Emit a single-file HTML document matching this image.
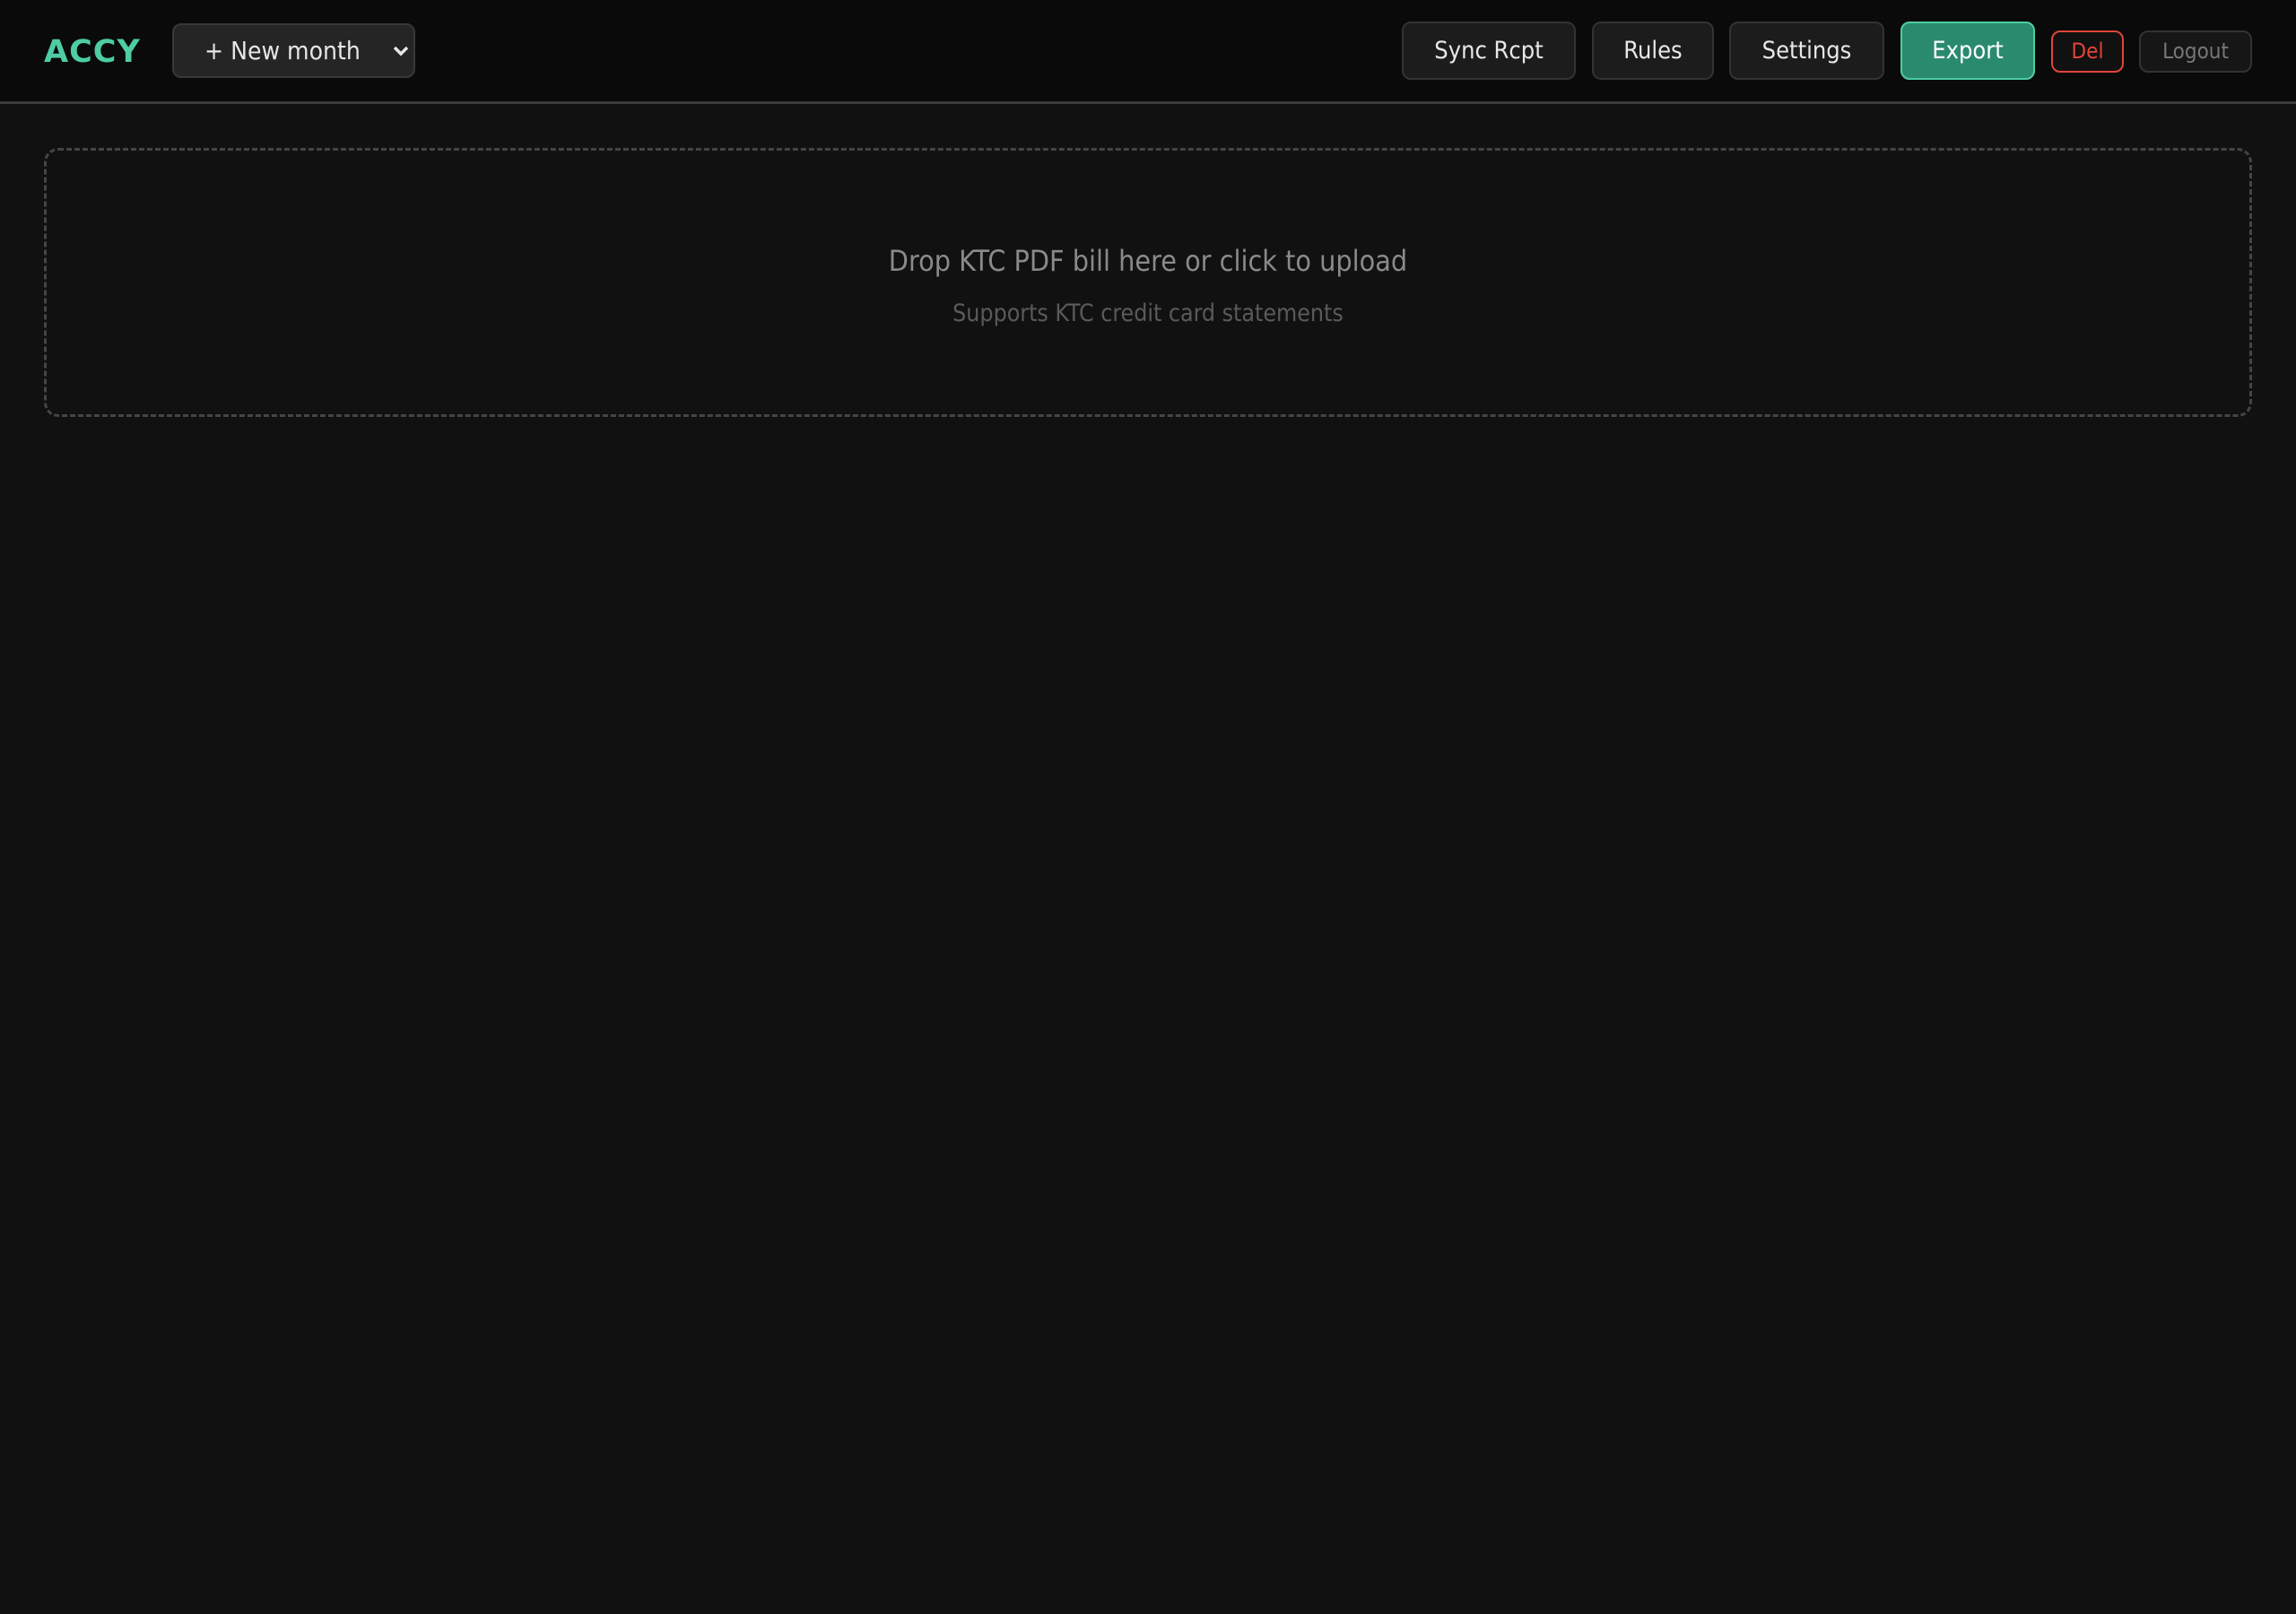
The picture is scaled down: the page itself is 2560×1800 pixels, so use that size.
<!DOCTYPE html>
<html><head><style>
*{box-sizing:border-box;margin:0;padding:0}
html,body{width:2560px;height:1800px;background:#111111;overflow:hidden;font-family:"DejaVu Sans Condensed","DejaVu Sans","Liberation Sans",sans-serif}
header{position:absolute;left:0;top:0;width:2560px;height:116px;background:#0a0a0a;border-bottom:3px solid #3a3a3a}
.logo{position:absolute;left:49px;top:38px;font-family:"DejaVu Sans",sans-serif;font-weight:bold;font-size:35px;color:#4ecca3;letter-spacing:1px}
.sel{position:absolute;left:192px;top:26px;width:271px;height:61px;background:#252525;border:2px solid #383838;border-radius:10px;color:#e6e6e6;font-size:28px;line-height:57px;padding-left:34px}
.sel svg{position:absolute;left:244px;top:22px}
.btn{position:absolute;top:24px;height:65px;background:#1c1c1c;border:2px solid #333;border-radius:10px;color:#e8e8e8;font-size:27px;line-height:61px;text-align:center}
.sm{top:34px;height:47px;line-height:43px;font-size:24px}
.drop{position:absolute;left:49px;top:165px;width:2462px;height:300px;border:3px dashed #444;border-radius:16px;text-align:center}
.t1{position:absolute;left:0;right:0;top:104px;font-size:32px;color:#8a8a8a;font-weight:500}
.t2{position:absolute;left:0;right:0;top:166px;font-size:26.5px;color:#5a5a5a}
</style></head><body>
<header>
<div class="logo">ACCY</div>
<div class="sel">+ New month<svg width="18" height="14" viewBox="0 0 18 14"><path d="M2 3 L9 10 L16 3" fill="none" stroke="#e6e6e6" stroke-width="3.5"/></svg></div>
<div class="btn" style="left:1563px;width:194px">Sync Rcpt</div>
<div class="btn" style="left:1775px;width:136px">Rules</div>
<div class="btn" style="left:1928px;width:173px">Settings</div>
<div class="btn" style="left:2119px;width:150px;background:#2a8a6e;border-color:#4ecca3;color:#fff">Export</div>
<div class="btn sm" style="left:2287px;width:81px;border-color:#e0453a;color:#e0453a;background:#111">Del</div>
<div class="btn sm" style="left:2385px;width:126px;color:#777;background:#161616">Logout</div>
</header>
<div class="drop">
<div class="t1">Drop KTC PDF bill here or click to upload</div>
<div class="t2">Supports KTC credit card statements</div>
</div>
</body></html>
